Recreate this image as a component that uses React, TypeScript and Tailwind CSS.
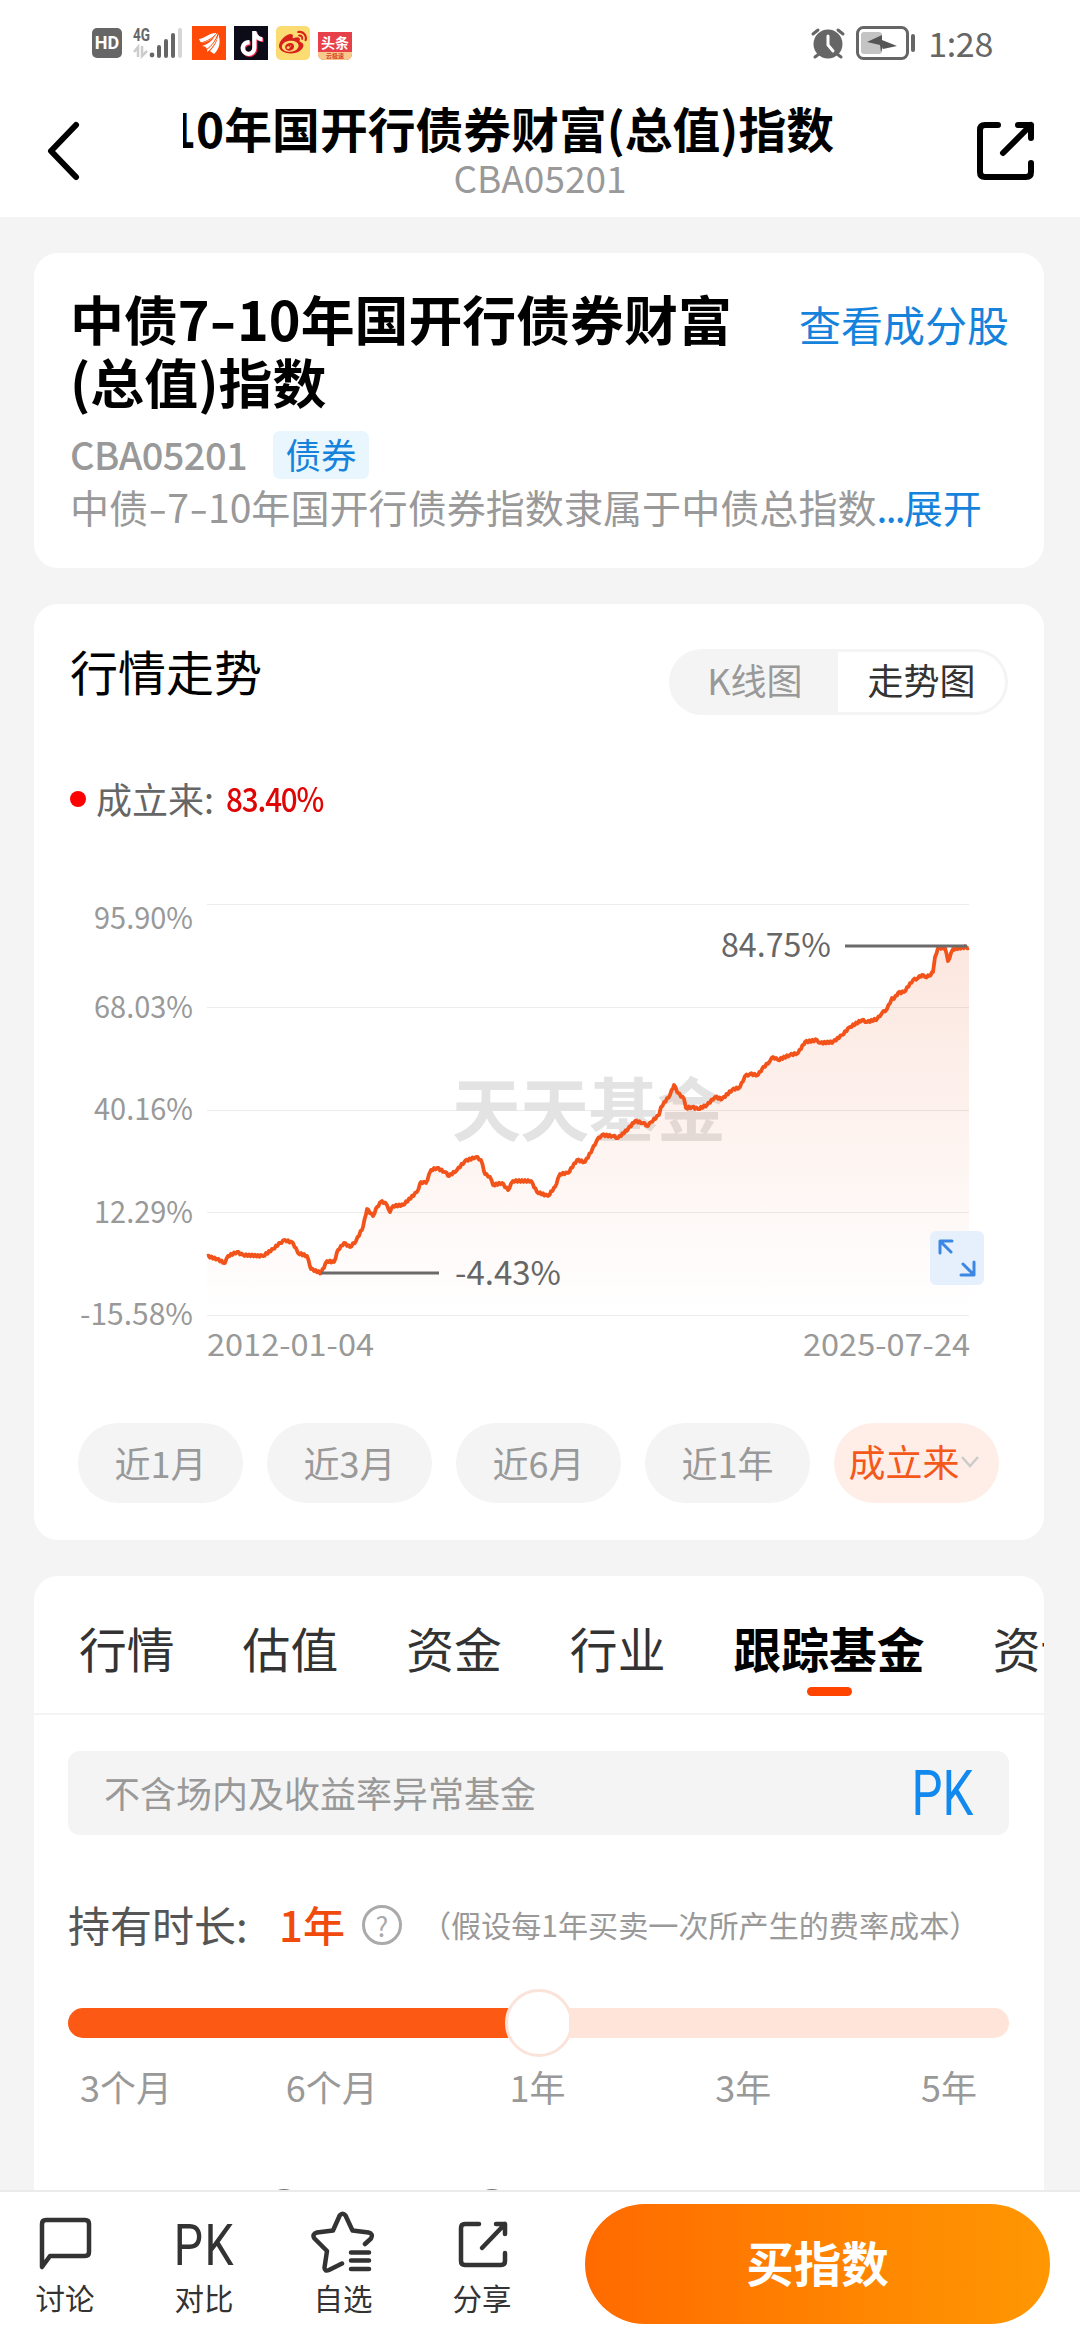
import type { ReactNode } from "react";
import { FaTiktok, FaWeibo } from "react-icons/fa6";

const TREND: [number, number][] = [
  [173, 396], [183, 399], [191, 403], [194, 396], [203, 392], [209, 395], [229, 396], [239, 389],
  [246, 383], [251, 380], [259, 383], [264, 393], [273, 396], [277, 409], [287, 413], [293, 401],
  [300, 402], [304, 390], [310, 383], [316, 387], [322, 381], [329, 367], [333, 349], [339, 356],
  [343, 347], [348, 341], [353, 345], [356, 352], [359, 346], [369, 345], [383, 332], [387, 322],
  [392, 323], [397, 310], [403, 308], [411, 312], [415, 316], [423, 310], [431, 301], [442, 297],
  [447, 300], [451, 314], [456, 317], [459, 325], [468, 323], [474, 330], [479, 321], [497, 321],
  [503, 332], [514, 336], [521, 327], [526, 314], [534, 313], [543, 300], [551, 302], [558, 290],
  [563, 280], [568, 275], [579, 276], [584, 278], [594, 269], [601, 261], [609, 263], [614, 266],
  [617, 262], [625, 255], [627, 247], [636, 235], [640, 225], [644, 233], [650, 239], [652, 248],
  [658, 247], [664, 249], [673, 245], [681, 237], [688, 239], [698, 230], [706, 227], [711, 216],
  [716, 214], [724, 215], [728, 209], [736, 201], [739, 197], [744, 200], [756, 195], [764, 193],
  [771, 182], [783, 180], [786, 183], [799, 182], [808, 175], [816, 167], [828, 160], [833, 162],
  [843, 159], [848, 153], [853, 149], [858, 138], [860, 139], [864, 133], [870, 132], [879, 120],
  [884, 118], [888, 115], [891, 117], [895, 116], [899, 112], [901, 97], [904, 88], [911, 88],
  [914, 101], [919, 89], [932, 87], [935, 88],
];

const GRID = [
  { y: 44.5, labelY: 69, label: "95.90%" },
  { y: 147.5, labelY: 158, label: "68.03%" },
  { y: 250.5, labelY: 260, label: "40.16%" },
  { y: 352.5, labelY: 363, label: "12.29%" },
  { y: 455.5, labelY: 465, label: "-15.58%" },
];

const PERIODS = ["近1月", "近3月", "近6月", "近1年"];
const TABS = ["行情", "估值", "资金", "行业", "跟踪基金", "资讯"];
const DURATIONS = ["3个月", "6个月", "1年", "3年", "5年"];

function withTicks(points: [number, number][]) {
  const out: string[] = [];
  let n = 0;
  points.forEach(([x, y], i) => {
    out.push(`${x},${y}`);
    const next = points[i + 1];
    if (!next) return;
    for (let px = x + 1.5; px < next[0] - 0.5; px += 1.5) {
      const base = y + ((next[1] - y) * (px - x)) / (next[0] - x);
      const tick = n++ % 2 === 0 ? -0.9 : 0.9;
      out.push(`${px},${(base + tick).toFixed(1)}`);
    }
  });
  return out.join(" ");
}

function StatusBar() {
  return (
    <div className="flex h-[86px] items-center pl-[92px] pr-[87px]">
      <div className="flex h-[30px] w-[30px] items-center justify-center rounded-[5px] bg-[#666] font-[Roboto] text-[18px] font-bold leading-[30px] text-white">
        HD
      </div>
      <svg className="ml-[10px]" width="52" height="34" viewBox="0 0 52 34">
        <text x="1" y="15" fontFamily="Roboto" fontSize="19" fontWeight="700" fill="#666" textLength="17" lengthAdjust="spacingAndGlyphs">4G</text>
        <path d="M2 26l4-5v10M10 20v10l5-5" stroke="#ccc" strokeWidth="2.5" fill="none" />
        <circle cx="20" cy="29" r="2.4" fill="#666" />
        <path d="M27 21v9M34 15v15M41 9v21" stroke="#666" strokeWidth="4" strokeLinecap="round" />
        <path d="M48 4v26" stroke="#d6d6d6" strokeWidth="4" strokeLinecap="round" />
      </svg>
      <svg className="ml-2" width="34" height="34" viewBox="0 0 34 34">
        <rect width="34" height="34" fill="#ff4a08" />
        <path d="M7 13C14 12 17 6 26 7C23 11 15 17 9 17Z" fill="#fff" />
        <path d="M10 20C17 18 22 13 25 7C27 12 21 22 15 26C16 23 14 20 10 20Z" fill="#fff" />
        <path d="M18 25C23 20 26 14 26 8C29 14 28 23 22 28Z" fill="#fff" />
        <path d="M8 17C15 16 22 11 25 7M14 24C20 20 24 14 26 8" stroke="#ff4a08" strokeWidth="1" fill="none" />
      </svg>
      <div className="ml-2 flex h-[34px] w-[34px] items-center justify-center bg-[#0c0b18]">
        <FaTiktok className="size-[25px] text-white drop-shadow-[1px_1px_0_#f02c56]" />
      </div>
      <div className="ml-2 flex h-[34px] w-[34px] items-center justify-center rounded-[5px] bg-[#fbdc73]">
        <FaWeibo className="size-[28px] text-[#d8201c]" />
      </div>
      <div className="ml-2 mt-[6px] flex h-[28px] w-[34px] flex-col items-center overflow-hidden rounded-b-[6px] bg-[#e8404a]">
        <span className="text-[14px] font-bold leading-[20px] text-white">头条</span>
        <span className="flex h-2 w-full items-center justify-center bg-[#f8c88c] text-[6px] font-bold leading-none text-[#d8402c]">
          云极速
        </span>
      </div>
      <svg className="ml-auto" width="36" height="34" viewBox="0 0 36 34">
        <circle cx="18" cy="18" r="14.5" fill="#666" />
        <path d="M3 8l5-4M33 8l-5-4M5 31l4-3M31 31l-4-3" stroke="#666" strokeWidth="3" strokeLinecap="round" />
        <path d="M18 10v9l5 6" stroke="#fff" strokeWidth="3" fill="none" strokeLinecap="round" />
      </svg>
      <svg className="ml-[10px]" width="62" height="34" viewBox="0 0 62 34">
        <rect x="1.5" y="1.5" width="50" height="31" rx="6" fill="none" stroke="#666" strokeWidth="3" />
        <rect x="5" y="6" width="21" height="22" rx="3" fill="#c4c4c4" />
        <path d="M11 16l15-7v5l15 6-14 3v-2l-2 5-1-7z" fill="#555" />
        <path d="M57 10v14" stroke="#666" strokeWidth="4" strokeLinecap="round" />
      </svg>
      <span className="ml-[10px] text-[34px] leading-[34px] tracking-[-0.3px] text-[#666]">1:28</span>
    </div>
  );
}

function Header() {
  return (
    <div className="flex h-[131px] items-start pl-[46px] pr-[42px]">
      <svg className="mt-[34px]" width="36" height="64" viewBox="0 0 36 64" fill="none" stroke="#000" strokeWidth="6" strokeLinecap="round" strokeLinejoin="round">
        <path d="M30 5L5 31l25 26" />
      </svg>
      <div className="ml-[98px] flex w-[720px] flex-col items-center">
        <div className="mr-[63px] flex w-[651px] justify-end overflow-hidden">
          <h1 className="shrink-0 whitespace-nowrap text-[47.8px] font-bold leading-[84px] text-black">
            中债7-10年国开行债券财富(总值)指数
          </h1>
        </div>
        <span className="-mt-[10px] text-[37px] leading-[34px] text-[#999]">CBA05201</span>
      </div>
      <svg className="ml-auto mt-[33px]" width="64" height="64" viewBox="0 0 64 64" fill="none" stroke="#000" strokeWidth="6" strokeLinecap="round" strokeLinejoin="round">
        <path d="M24 6H11q-5 0-5 5v42q0 5 5 5h41q5 0 5-5v-9" />
        <path d="M29 34L57 6M44 6h13v13" />
      </svg>
    </div>
  );
}

function Card({ className = "", children }: { className?: string; children: ReactNode }) {
  return <section className={`w-[1010px] shrink-0 bg-white ${className}`}>{children}</section>;
}

// the hyphen is drawn wider than the font's own
function Dash() {
  return <span className="mx-[0.07em] inline-block scale-x-140">-</span>;
}

function SummaryCard() {
  return (
    <Card className="h-[315px] rounded-[24px] pl-[36px] pr-[35px] pt-[33px]">
      <div className="flex items-start justify-between">
        <h2 className="w-[680px] text-[53.9px] font-bold leading-[63px] text-black">
          中债7<Dash />10年国开行债券财富(总值)指数
        </h2>
        <a className="mt-[8px] text-[42px] leading-[60px] text-[#1583dc]">查看成分股</a>
      </div>
      <div className="mt-[19px] flex h-[48px] items-center">
        <span className="w-[203px] pb-[3px] text-[38px] font-medium leading-[42px] tracking-[-0.6px] text-[#999]">CBA05201</span>
        <span className="flex h-[48px] w-[96px] items-center justify-center rounded-[7px] bg-[#e9f6fe] pb-[3px] text-[35.5px] leading-none text-[#1583dc]">
          债券
        </span>
      </div>
      <p className="whitespace-nowrap text-[39.1px] leading-[54px] text-[#999]">
        中债<Dash />7<Dash />10年国开行债券指数隶属于中债总指数
        <span className="text-[#1583dc]">
          <span className="tracking-[-1.8px]">...</span>展开
        </span>
      </p>
    </Card>
  );
}

function TrendChart() {
  const line = withTicks(TREND);
  return (
    <svg className="block" width="1010" height="520" viewBox="0 0 1010 520" fontFamily="'Noto Sans CJK SC', sans-serif">
      <defs>
        <linearGradient id="area" x1="0" y1="0" x2="0" y2="1">
          <stop offset="0" stopColor="#e8501a" stopOpacity="0.14" />
          <stop offset="1" stopColor="#e8501a" stopOpacity="0" />
        </linearGradient>
      </defs>
      {GRID.map((g) => (
        <g key={g.label}>
          <line x1="173" x2="935" y1={g.y} y2={g.y} stroke="#ececec" />
          <text x="159" y={g.labelY} textAnchor="end" fontSize="30" fill="#999" textLength={g.label.length === 7 ? 113 : 99} lengthAdjust="spacingAndGlyphs">
            {g.label}
          </text>
        </g>
      ))}
      <text x="418" y="276" fontSize="69" fontWeight="700" fill="#e3e3e3" textLength="274">
        天天基金
      </text>
      <polygon points={`173,455 ${line} 935,455`} fill="url(#area)" />
      <polyline points={line} fill="none" stroke="#f2531a" strokeWidth="3.8" strokeLinejoin="round" />
      <path d="M811 86h122M287 413h118" stroke="#6a6a6a" strokeWidth="3" />
      <text x="797" y="97" textAnchor="end" fontSize="33" fill="#666" textLength="110" lengthAdjust="spacingAndGlyphs">84.75%</text>
      <text x="421" y="425" fontSize="33" fill="#666" textLength="106" lengthAdjust="spacingAndGlyphs">-4.43%</text>
      <text x="173" y="496" fontSize="30" fill="#999" textLength="167" lengthAdjust="spacingAndGlyphs">2012-01-04</text>
      <text x="936" y="496" textAnchor="end" fontSize="30" fill="#999" textLength="167" lengthAdjust="spacingAndGlyphs">2025-07-24</text>
      <rect x="896" y="371" width="54" height="54" rx="6" fill="#e3eefd" fillOpacity="0.9" />
      <path d="M906 393v-12h12M907 382l10 10M940 402v13h-13M939 414l-10-10" fill="none" stroke="#3c87e4" strokeWidth="3" strokeLinecap="round" strokeLinejoin="round" />
    </svg>
  );
}

function TrendCard() {
  return (
    <Card className="mt-9 h-[936px] rounded-[24px]">
      <div className="flex h-[156px] items-start justify-between pl-[36px] pr-[36px] pt-[45px]">
        <h3 className="-mt-[3px] text-[48px] leading-[48px] text-black">行情走势</h3>
        <div className="flex h-[66px] w-[339px] rounded-full bg-[#f4f4f4] p-[3px] text-[36px] leading-none">
          <span className="flex w-[166px] items-center justify-center pb-[6px] text-[#999]">K线图</span>
          <span className="flex flex-1 items-center justify-center rounded-r-full bg-white pb-[6px] text-[#333]">走势图</span>
        </div>
      </div>
      <div className="flex h-[78px] items-center pl-[36px]">
        <i className="size-[16px] rounded-full bg-[#f00]" />
        <span className="ml-[10px] pb-[3px] text-[36px] leading-none text-[#666]">成立来:</span>
        <span className="ml-[12px] origin-left scale-x-[0.87] pb-[2px] text-[34px] font-medium leading-none tracking-[-1.3px] text-[#e00505]">83.40%</span>
      </div>
      <div className="mt-[22px]">
        <TrendChart />
      </div>
      <div className="mt-[43px] flex gap-6 pl-[44px]">
        {PERIODS.map((p) => (
          <span key={p} className="flex h-[80px] w-[165px] items-center justify-center rounded-full bg-[#f4f4f4] pb-[3px] text-[36px] leading-none text-[#999]">
            {p}
          </span>
        ))}
        <span className="flex h-[80px] w-[165px] items-center justify-center rounded-full bg-[#ffeee7] pb-[3px] pr-[5px] text-[37px] leading-none text-[#f4581a]">
          成立来
          <svg width="20" height="14" viewBox="0 0 20 14" fill="none" stroke="#ccc" strokeWidth="2.5">
            <path d="M2 2l8 9 8-9" />
          </svg>
        </span>
      </div>
    </Card>
  );
}

function FundCard() {
  return (
    <Card className="mt-9 h-[700px] overflow-hidden rounded-t-[24px]">
      <div className="flex h-[139px] gap-[68px] overflow-hidden border-b-2 border-[#f4f4f4] pl-[45px] pt-[37px] text-[47.8px] leading-[70px] text-[#333]">
        {TABS.map((t) =>
          t === "跟踪基金" ? (
            <div key={t} className="flex shrink-0 flex-col items-center font-bold text-black">
              {t}
              <i className="mt-[4px] h-[9px] w-[45px] rounded-full bg-[#ff4400]" />
            </div>
          ) : (
            <span key={t} className="shrink-0">{t}</span>
          )
        )}
      </div>
      <div className="ml-[34px] mt-[36px] flex h-[84px] w-[941px] items-center justify-between rounded-[12px] bg-[#f4f4f4] pl-[36px] pr-[36px]">
        <span className="pb-[3px] text-[36px] leading-none text-[#999]">不含场内及收益率异常基金</span>
        <span className="origin-right scale-x-[0.78] font-[Roboto] text-[63px] leading-none text-[#1189ee]">PK</span>
      </div>
      <div className="ml-[34px] mt-[59px] flex h-[60px] items-center whitespace-nowrap">
        <span className="w-[211px] text-[42px] leading-none text-[#555]">持有时长:</span>
        <span className="text-[42px] font-medium leading-none text-[#f04a0c]">1年</span>
        <span className="ml-[17px] mt-[2px] flex size-[40px] items-center justify-center rounded-full border-3 border-[#aaa] text-[27px] leading-none text-[#aaa]">
          ?
        </span>
        <span className="ml-[19px] text-[30.1px] leading-none text-[#999]">（假设每1年买卖一次所产生的费率成本）</span>
      </div>
      <div className="ml-[34px] mt-[35px] flex h-[68px] w-[941px] items-center">
        <div className="h-[30px] flex-1 rounded-l-full bg-[#fc5a14]" />
        <div className="-mx-1 size-[68px] shrink-0 rounded-full border-3 border-[#fbe3da] bg-white" />
        <div className="h-[30px] flex-1 rounded-r-full bg-[#ffe4da]" />
      </div>
      <div className="mt-[2px] flex justify-between pl-[42px] pr-[45px] text-[36px] leading-[54px] text-[#999]">
        {DURATIONS.map((d) => (
          <span key={d} className="w-[100px] text-center">{d}</span>
        ))}
      </div>
      {/* next row, mostly under the bottom bar */}
      <div className="mt-[76px] flex gap-[172px] pl-[232px]">
        <i className="size-[36px] rounded-full border-3 border-[#777]" />
        <i className="size-[36px] rounded-full border-3 border-[#777]" />
      </div>
    </Card>
  );
}

function Action({ label, children }: { label: string; children: ReactNode }) {
  return (
    <div className="flex w-[128px] flex-col items-center">
      <div className="flex size-[64px] items-center justify-center">{children}</div>
      <span className="mt-[4px] text-[29.5px] leading-[38px] text-[#333]">{label}</span>
    </div>
  );
}

const iconProps = {
  width: 64,
  height: 64,
  viewBox: "0 0 64 64",
  fill: "none",
  stroke: "#333",
  strokeWidth: 4.5,
  strokeLinecap: "round",
  strokeLinejoin: "round",
} as const;

function BottomBar() {
  return (
    <div className="flex h-[150px] items-start border-t-2 border-[#ebebeb] bg-white">
      <div className="flex gap-[11px] pl-[1px] pt-[18px]">
        <Action label="讨论">
          <svg {...iconProps}>
            <path d="M9 57V14q0-4 4-4h39q4 0 4 4v28q0 4-4 4H17z" />
          </svg>
        </Action>
        <Action label="对比">
          <span className="scale-x-[0.8] pt-[6px] font-[Roboto] text-[58px] leading-none tracking-[2px] text-[#333]">PK</span>
        </Action>
        <Action label="自选">
          <svg {...iconProps}>
            <path d="M54 34L60 28.500Q62.500 23.500 57.500 22.500L41.500 20.500L34.500 5.500Q31.600 2 28.700 5.500L22 20.500L6 22.500Q0.500 24 3.500 28.500L16 41L13.500 57.500Q13.500 62 18 60L31 53.500" />
            <path d="M40 42.500h18M40 50.500h18M40 59h18" />
          </svg>
        </Action>
        <Action label="分享">
          <svg {...iconProps}>
            <path d="M29 14H15q-4 0-4 4v33q0 4 4 4h36q4 0 4-4v-8" />
            <path d="M32 38L55 14M46 14h9v10" />
          </svg>
        </Action>
      </div>
      <button className="ml-[39px] mt-[12px] h-[120px] w-[465px] rounded-full bg-linear-to-r from-[#ff6a00] to-[#ff9702] pb-[4px] text-[47.5px] font-bold text-white">
        买指数
      </button>
    </div>
  );
}

export default function App() {
  return (
    <div className="flex h-[2340px] w-[1080px] flex-col overflow-hidden bg-white font-['Noto_Sans_CJK_SC',sans-serif]">
      <StatusBar />
      <Header />
      <main className="flex min-h-0 flex-1 flex-col overflow-hidden bg-[#f4f4f4] pl-[34px] pt-[36px]">
        <SummaryCard />
        <TrendCard />
        <FundCard />
      </main>
      <BottomBar />
    </div>
  );
}
